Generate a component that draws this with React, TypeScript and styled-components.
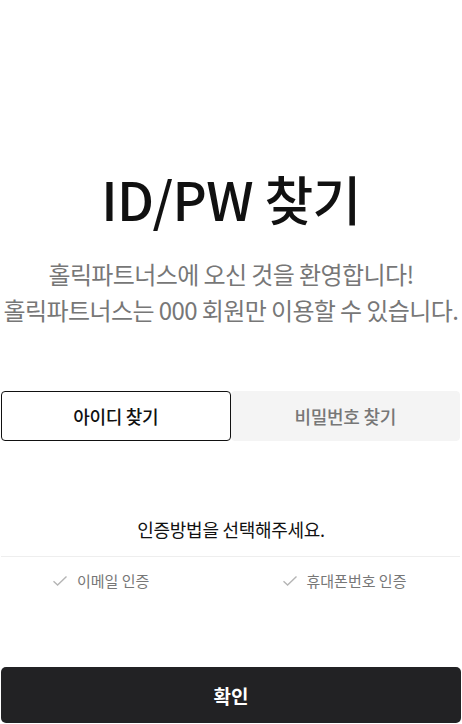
import React, { useState } from "react";
import styled, { createGlobalStyle } from "styled-components";

const Global = createGlobalStyle`
  html, body { margin: 0; padding: 0; background: #fff; }
  body { font-family: "Noto Sans CJK KR", "Noto Sans", sans-serif; color: #111; }
  * { box-sizing: border-box; }
`;

const Page = styled.div`
  width: 462px;
  height: 724px;
  padding: 0 1px;
  display: flex;
  flex-direction: column;
  overflow: hidden;
`;

const Title = styled.h1`
  margin: 166px 0 0;
  text-align: center;
  font-size: 53px;
  font-weight: 500;
  line-height: 64px;
  letter-spacing: -0.6px;
  color: #111;
`;

const Sub = styled.p`
  margin: 26px 0 0;
  text-align: center;
  font-size: 24px;
  line-height: 36px;
  letter-spacing: -0.6px;
  color: #777;
  font-weight: 400;
`;

const Tabs = styled.div`
  margin-top: 63px;
  display: grid;
  grid-template-columns: 1fr 1fr;
  padding-right: 1px;
`;

const Tab = styled.button<{ $active: boolean }>`
  height: 50px;
  font-family: inherit;
  font-size: 18px;
  font-weight: 500;
  letter-spacing: -0.3px;
  border-radius: 4px;
  cursor: pointer;
  border: 1px solid ${(p) => (p.$active ? "#111" : "#f4f4f4")};
  background: ${(p) => (p.$active ? "#fff" : "#f4f4f4")};
  color: ${(p) => (p.$active ? "#111" : "#777")};
`;

const Guide = styled.p`
  margin: 74px 0 0;
  text-align: center;
  font-size: 18px;
  line-height: 28px;
  letter-spacing: -0.3px;
  color: #111;
`;

const Methods = styled.div`
  margin-top: 13px;
  border-top: 1px solid #eeeeee;
  margin-right: 1px;
  display: grid;
  grid-template-columns: 1fr 1fr;
  padding-top: 13px;
`;

const Method = styled.label`
  display: flex;
  align-items: center;
  gap: 9px;
  padding-left: 51px;
  font-size: 15px;
  line-height: 22px;
  color: #777;
  cursor: pointer;
`;

const Check = () => (
  <svg width="16" height="12" viewBox="0 0 16 12" fill="none">
    <path d="M1.5 6.2 L5.6 10 L14.5 1.5" stroke="#b5b5b5" strokeWidth="1.4" />
  </svg>
);

const Confirm = styled.button`
  margin-top: auto;
  margin-bottom: 1px;
  height: 56px;
  width: 100%;
  border: none;
  border-radius: 5px;
  background: #222224;
  color: #fff;
  font-family: inherit;
  font-size: 19px;
  font-weight: 700;
  cursor: pointer;
`;

export default function App() {
  const [tab, setTab] = useState(0);
  return (
    <>
      <Global />
      <Page>
        <Title>ID/PW 찾기</Title>
        <Sub>
          홀릭파트너스에 오신 것을 환영합니다!
          <br />
          홀릭파트너스는 000 회원만 이용할 수 있습니다.
        </Sub>
        <Tabs>
          <Tab $active={tab === 0} onClick={() => setTab(0)}>아이디 찾기</Tab>
          <Tab $active={tab === 1} onClick={() => setTab(1)}>비밀번호 찾기</Tab>
        </Tabs>
        <Guide>인증방법을 선택해주세요.</Guide>
        <Methods>
          <Method><Check />이메일 인증</Method>
          <Method><Check />휴대폰번호 인증</Method>
        </Methods>
        <Confirm>확인</Confirm>
      </Page>
    </>
  );
}
